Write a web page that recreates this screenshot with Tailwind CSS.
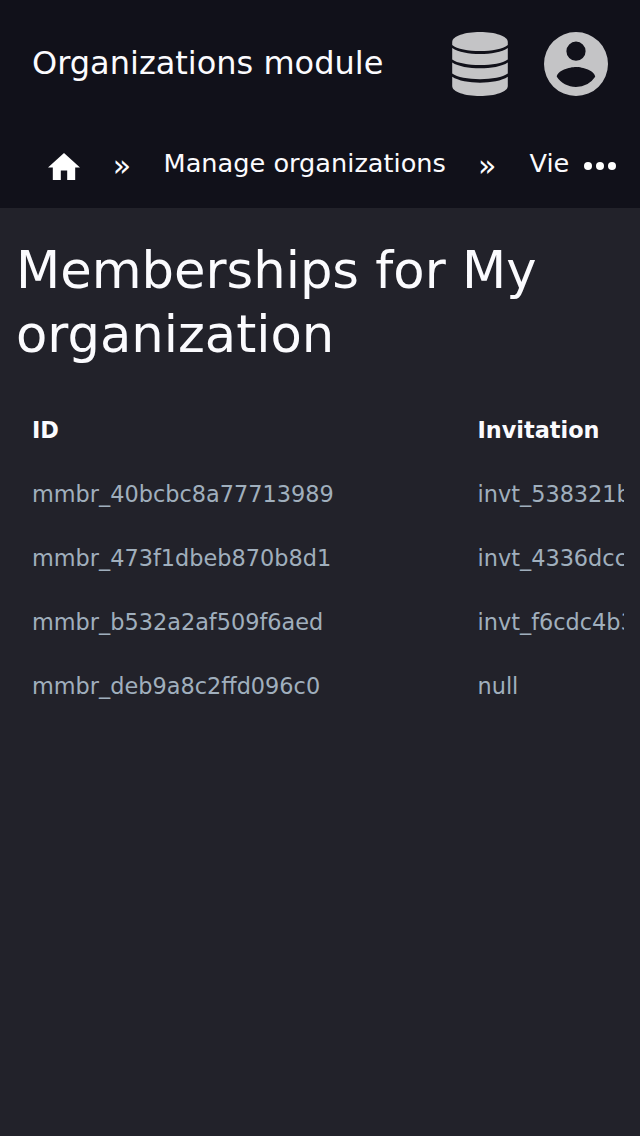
<!DOCTYPE html>
<html lang="en">
<head>
<meta charset="utf-8">
<title>Organizations module</title>
<script src="https://cdn.jsdelivr.net/npm/@tailwindcss/browser@4"></script>
</head>
<body class="h-[1136px] w-[640px] overflow-hidden bg-[#22222a] font-['DejaVu_Sans',sans-serif] text-[#fbfbfe]">
<header class="h-[208px] bg-[#11111a]">
  <div class="flex h-32 items-center px-8">
    <h1 class="flex-1 whitespace-nowrap pb-0.5 text-[32px] leading-[48px]">Organizations module</h1>
    <svg class="mr-8 h-16 w-16" viewBox="0 0 64 64" fill="#c4c4c6">
      <path d="M4.200 10C4.200 4 17 0 32 0s27.800 4 27.800 10v3c-5 4-16 6-27.800 6S9 17 4.200 13z"/>
      <path d="M4.200 16c6 4 17 6 27.800 6S54 20 59.800 16v11.400c-5 3.800-16 5.500-27.800 5.500S9 31 4.200 27.400z"/>
      <path d="M4.200 30.400c6 4 17 5.900 27.800 5.900s22-1.900 27.800-5.900v11.200c-5 3.800-16 5.600-27.800 5.600S9 45.400 4.200 41.600z"/>
      <path d="M4.200 44.800c6 4 17 5.900 27.800 5.900s22-1.900 27.800-5.900V54c0 6-12.800 10-27.800 10S4.200 60 4.200 54z"/>
    </svg>
    <svg class="h-16 w-16" viewBox="2 2 20 20" fill="#c4c4c6"><path d="M12 19.200c-2.500 0-4.710-1.280-6-3.200.03-2 4-3.100 6-3.100s5.970 1.100 6 3.100a7.230 7.230 0 0 1-6 3.200M12 5a3 3 0 0 1 0 6 3 3 0 0 1 0-6m0-3a10 10 0 0 0 0 20 10 10 0 0 0 0-20"/></svg>
  </div>
  <nav class="flex h-20 items-start pl-12 pt-4 text-[25.6px] leading-[38px]">
    <svg class="mt-[8.600px] h-[27.200px] w-8" viewBox="2 3 20 17" fill="white"><path d="M10 20v-6h4v6h5v-8h3L12 3 2 12h3v8z"/></svg>
    <span class="ml-[32.800px] mt-[3px] w-5 text-[30px]">»</span>
    <span class="ml-[30.800px] whitespace-nowrap">Manage organizations</span>
    <span class="ml-8 mt-[3px] w-5 text-[30px]">»</span>
    <span class="ml-[31.600px]">Vie</span>
    <svg class="ml-auto mr-6 mt-[18px] h-2 w-8" viewBox="0 0 32 8" fill="white"><circle cx="4" cy="4" r="4"/><circle cx="16" cy="4" r="4"/><circle cx="28" cy="4" r="4"/></svg>
  </nav>
</header>
<main class="px-4 pt-[30px]">
  <h2 class="text-[51.200px] leading-[64px]">Memberships for My organization</h2>
  <div class="mt-8 overflow-hidden">
    <table class="w-[1200px] table-fixed text-left text-[22.400px] leading-8 text-[#a0afbd]">
      <colgroup><col class="w-[445.500px]"><col></colgroup>
      <thead class="text-[#fbfbfe]"><tr class="h-16"><th class="px-4">ID</th><th class="px-4">Invitation</th></tr></thead>
      <tbody>
        <tr class="h-16"><td class="px-4">mmbr_40bcbc8a77713989</td><td class="px-4">invt_538321b</td></tr>
        <tr class="h-16"><td class="px-4">mmbr_473f1dbeb870b8d1</td><td class="px-4">invt_4336dcc</td></tr>
        <tr class="h-16"><td class="px-4">mmbr_b532a2af509f6aed</td><td class="px-4">invt_f6cdc4b3</td></tr>
        <tr class="h-16"><td class="px-4">mmbr_deb9a8c2ffd096c0</td><td class="px-4">null</td></tr>
      </tbody>
    </table>
  </div>
</main>
</body>
</html>
